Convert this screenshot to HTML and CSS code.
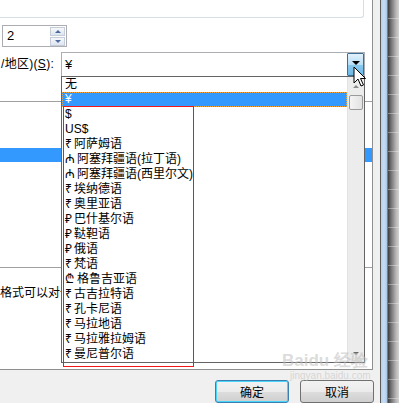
FILE: index.html
```html
<!DOCTYPE html>
<html>
<head>
    <meta charset="utf-8">
    <link rel="stylesheet" href="styles.css">
</head>
<body>
<div class="screen">
    <div class="dialog">
        <div class="page">
            <div class="group"></div>
            <div class="spin">
                <span class="spin-text">2</span>
                <div class="spin-btns">
                    <div class="spin-btn"><span class="tri-up"></span></div>
                    <div class="spin-btn"><span class="tri-down"></span></div>
                </div>
            </div>
            <div class="currency-row">
                <div class="cur-label">/地区)(<u>S</u>):</div>
                <div class="combo">
                    <span class="combo-text">¥</span>
                    <div class="combo-btn"><span class="tri-black"></span></div>
                </div>
            </div>
            <div class="neg">
                <div class="neg-sel"></div>
            </div>
            <div class="hint">格式可以对一</div>
        </div>
        <div class="footer">
            <button class="btn btn-default">确定</button>
            <button class="btn">取消</button>
        </div>
    </div>
    <div class="frame-line"></div>
    <div class="frame-blue"></div>
    <div class="sheet"></div>

    <div class="droplist">
        <div class="items">
            <div class="item">无</div>
            <div class="item selected">¥</div>
            <div class="item">$</div>
            <div class="item">US$</div>
            <div class="item"><span class="sym">₹</span>阿萨姆语</div>
            <div class="item"><span class="sym wide">₼</span>阿塞拜疆语(拉丁语)</div>
            <div class="item"><span class="sym wide">₼</span>阿塞拜疆语(西里尔文)</div>
            <div class="item"><span class="sym">₹</span>埃纳德语</div>
            <div class="item"><span class="sym">₹</span>奥里亚语</div>
            <div class="item"><span class="sym">₽</span>巴什基尔语</div>
            <div class="item"><span class="sym">₽</span>鞑靼语</div>
            <div class="item"><span class="sym">₽</span>俄语</div>
            <div class="item"><span class="sym">₹</span>梵语</div>
            <div class="item"><span class="sym wide">₾</span>格鲁吉亚语</div>
            <div class="item"><span class="sym">₹</span>古吉拉特语</div>
            <div class="item"><span class="sym">₹</span>孔卡尼语</div>
            <div class="item"><span class="sym">₹</span>马拉地语</div>
            <div class="item"><span class="sym">₹</span>马拉雅拉姆语</div>
            <div class="item"><span class="sym">₹</span>曼尼普尔语</div>
        </div>
        <div class="scroll">
            <div class="scroll-up"><span class="tri-gray-up"></span></div>
            <div class="thumb"></div>
            <div class="scroll-track"></div>
            <div class="scroll-down"><span class="tri-gray-down"></span></div>
        </div>
    </div>

    <div class="mark"></div>

    <div class="watermark">
        <div class="wm-big">Bai<span>du</span> 经验</div>
        <div class="wm-small">jingyan.baidu.com</div>
    </div>

    <svg class="cursor" width="14" height="22" viewBox="0 0 14 22">
        <path d="M1 1 L1 17 L5 13 L8 20 L10.5 19 L7.5 12.5 L12.5 12.5 Z" fill="#fff" stroke="#000" stroke-width="1" stroke-linejoin="miter"/>
    </svg>
</div>
</body>
</html>
```

FILE: styles.css
```css
* {
    box-sizing: border-box;
}

body {
    margin: 0;
    font-family: "Liberation Sans", "Noto Sans CJK SC", "Noto Sans", sans-serif;
    font-size: 12px;
    color: #000;
}

.screen {
    position: relative;
    display: flex;
    width: 399px;
    height: 403px;
    overflow: hidden;
    background: #f0f0f0;
}

.dialog {
    width: 380px;
    height: 403px;
    background: #f0f0f0;
}

.page {
    width: 373px;
    height: 370px;
    background: #fff;
    border-right: 1px solid #8e8f8f;
    border-bottom: 1px solid #8e8f8f;
    overflow: hidden;
}

.group {
    width: 364px;
    height: 18px;
    border-right: 1px solid #d5dfe5;
    border-bottom: 1px solid #d5dfe5;
    border-bottom-right-radius: 3px;
}

.spin {
    display: flex;
    margin: 7px 0 0 2px;
    width: 65px;
    height: 22px;
    border: 1px solid #abadb3;
}

.spin-text {
    flex: 1;
    padding-left: 4px;
    line-height: 20px;
    font-size: 13px;
}

.spin-btns {
    display: flex;
    flex-direction: column;
    gap: 1px;
    padding: 1px 1px 0 0;
}

.spin-btn {
    display: flex;
    align-items: center;
    justify-content: center;
    width: 15px;
    height: 9px;
    border: 1px solid #c4cdd8;
    background: linear-gradient(#f6f8fb, #dde5ef);
}

.tri-up, .tri-down {
    width: 0;
    height: 0;
    border-left: 3px solid transparent;
    border-right: 3px solid transparent;
}

.tri-up {
    border-bottom: 3px solid #4a6b9c;
}

.tri-down {
    border-top: 3px solid #4a6b9c;
}

.currency-row {
    display: flex;
    margin-top: 5px;
    height: 25px;
}

.cur-label {
    width: 61px;
    padding-left: 1px;
    white-space: nowrap;
    letter-spacing: 0.3px;
    line-height: 25px;
}

.cur-label u {
    text-underline-offset: 1px;
}

.combo {
    display: flex;
    width: 304px;
    height: 25px;
    border: 1px solid #abadb3;
    border-bottom: none;
}

.combo-text {
    flex: 1;
    padding-left: 3px;
    line-height: 23px;
    font-size: 13px;
}

.combo-btn {
    display: flex;
    align-items: center;
    justify-content: center;
    width: 17px;
    height: 23px;
    border: 1px solid #3c6f95;
    border-radius: 1px;
    background: linear-gradient(#e2f1fb, #b9dff6 50%, #8bcaee 51%, #6db8e6);
}

.tri-black {
    width: 0;
    height: 0;
    margin-bottom: 4px;
    border-left: 4px solid transparent;
    border-right: 4px solid transparent;
    border-top: 4px solid #000;
}

.neg {
    margin-top: 24px;
    height: 167px;
    padding-top: 46px;
    border-top: 1px solid #a0a0a0;
    border-bottom: 1px solid #a0a0a0;
}

.neg-sel {
    height: 14px;
    background: #3399ff;
}

.hint {
    width: 61px;
    margin-top: 17px;
    line-height: 16px;
    white-space: nowrap;
    overflow: hidden;
}

.footer {
    display: flex;
    gap: 11px;
    padding: 10px 0 0 215px;
}

.btn {
    width: 74px;
    height: 23px;
    padding: 0;
    font-family: "Noto Sans CJK SC", sans-serif;
    font-size: 12px;
    color: #000;
    border: 1px solid #707070;
    border-radius: 3px;
    background: linear-gradient(#f2f2f2, #ebebeb 50%, #dddddd 51%, #cfcfcf);
}

.btn-default {
    border-color: #3c7fb1;
    box-shadow: inset 0 0 0 1px #48d4fb;
}

.frame-line {
    width: 1px;
    background: #5a5a5a;
}

.frame-blue {
    width: 7px;
    background: linear-gradient(to right, #b7cfe9, #c8ddf3 50%, #a9c6e8);
    border-right: 1px solid #6b7d92;
}

.sheet {
    width: 11px;
    background:
        repeating-linear-gradient(to bottom, transparent 0, transparent 18px, rgba(255, 255, 255, 0.35) 18px, rgba(255, 255, 255, 0.35) 19px),
        linear-gradient(to right, #3f3f3f, #7d7d7d 35%, #b9b9b9 75%, #d2d2d2);
}

/* dropdown list over the dialog */
.droplist {
    position: absolute;
    left: 61px;
    top: 76px;
    width: 304px;
    height: 287px;
    display: flex;
    background: #fff;
    border: 1px solid #646464;
}

.items {
    flex: 1;
    overflow: hidden;
}

.item {
    height: 15px;
    padding-left: 3px;
    line-height: 15px;
    white-space: nowrap;
}

.item.selected {
    background: #3399ff;
    color: #fff;
    border: 1px dotted #f3a53a;
    padding-left: 2px;
    line-height: 13px;
}

.sym {
    display: inline-block;
    width: 9px;
}

.sym.wide {
    width: 12px;
}

.scroll {
    display: flex;
    flex-direction: column;
    width: 17px;
    background: #ececec;
    border-left: 1px solid #e2e2e2;
}

.scroll-up {
    display: flex;
    align-items: center;
    justify-content: center;
    height: 18px;
}

.thumb {
    margin: 0 1px 0 1px;
    height: 15px;
    border: 1px solid #9a9a9a;
    border-radius: 2px;
    background: linear-gradient(to right, #f4f4f4, #e2e2e2);
}

.scroll-track {
    flex: 1;
}

.scroll-down {
    display: flex;
    align-items: center;
    justify-content: center;
    height: 17px;
}

.tri-gray-up, .tri-gray-down {
    width: 0;
    height: 0;
    border-left: 3px solid transparent;
    border-right: 3px solid transparent;
}

.tri-gray-up {
    border-bottom: 3px solid #8a8a8a;
}

.tri-gray-down {
    border-top: 3px solid #6a6a6a;
}

.mark {
    position: absolute;
    left: 63px;
    top: 106px;
    width: 131px;
    height: 261px;
    border: 1px solid #f01818;
}

.watermark {
    position: absolute;
    left: 282px;
    top: 352px;
    color: rgba(190, 190, 190, 0.55);
    font-family: "Liberation Sans", sans-serif;
    pointer-events: none;
}

.wm-big {
    font-size: 17px;
    font-weight: bold;
    line-height: 18px;
}

.wm-small {
    font-size: 10px;
    line-height: 12px;
    padding-left: 8px;
}

.cursor {
    position: absolute;
    left: 353px;
    top: 66px;
}
```
